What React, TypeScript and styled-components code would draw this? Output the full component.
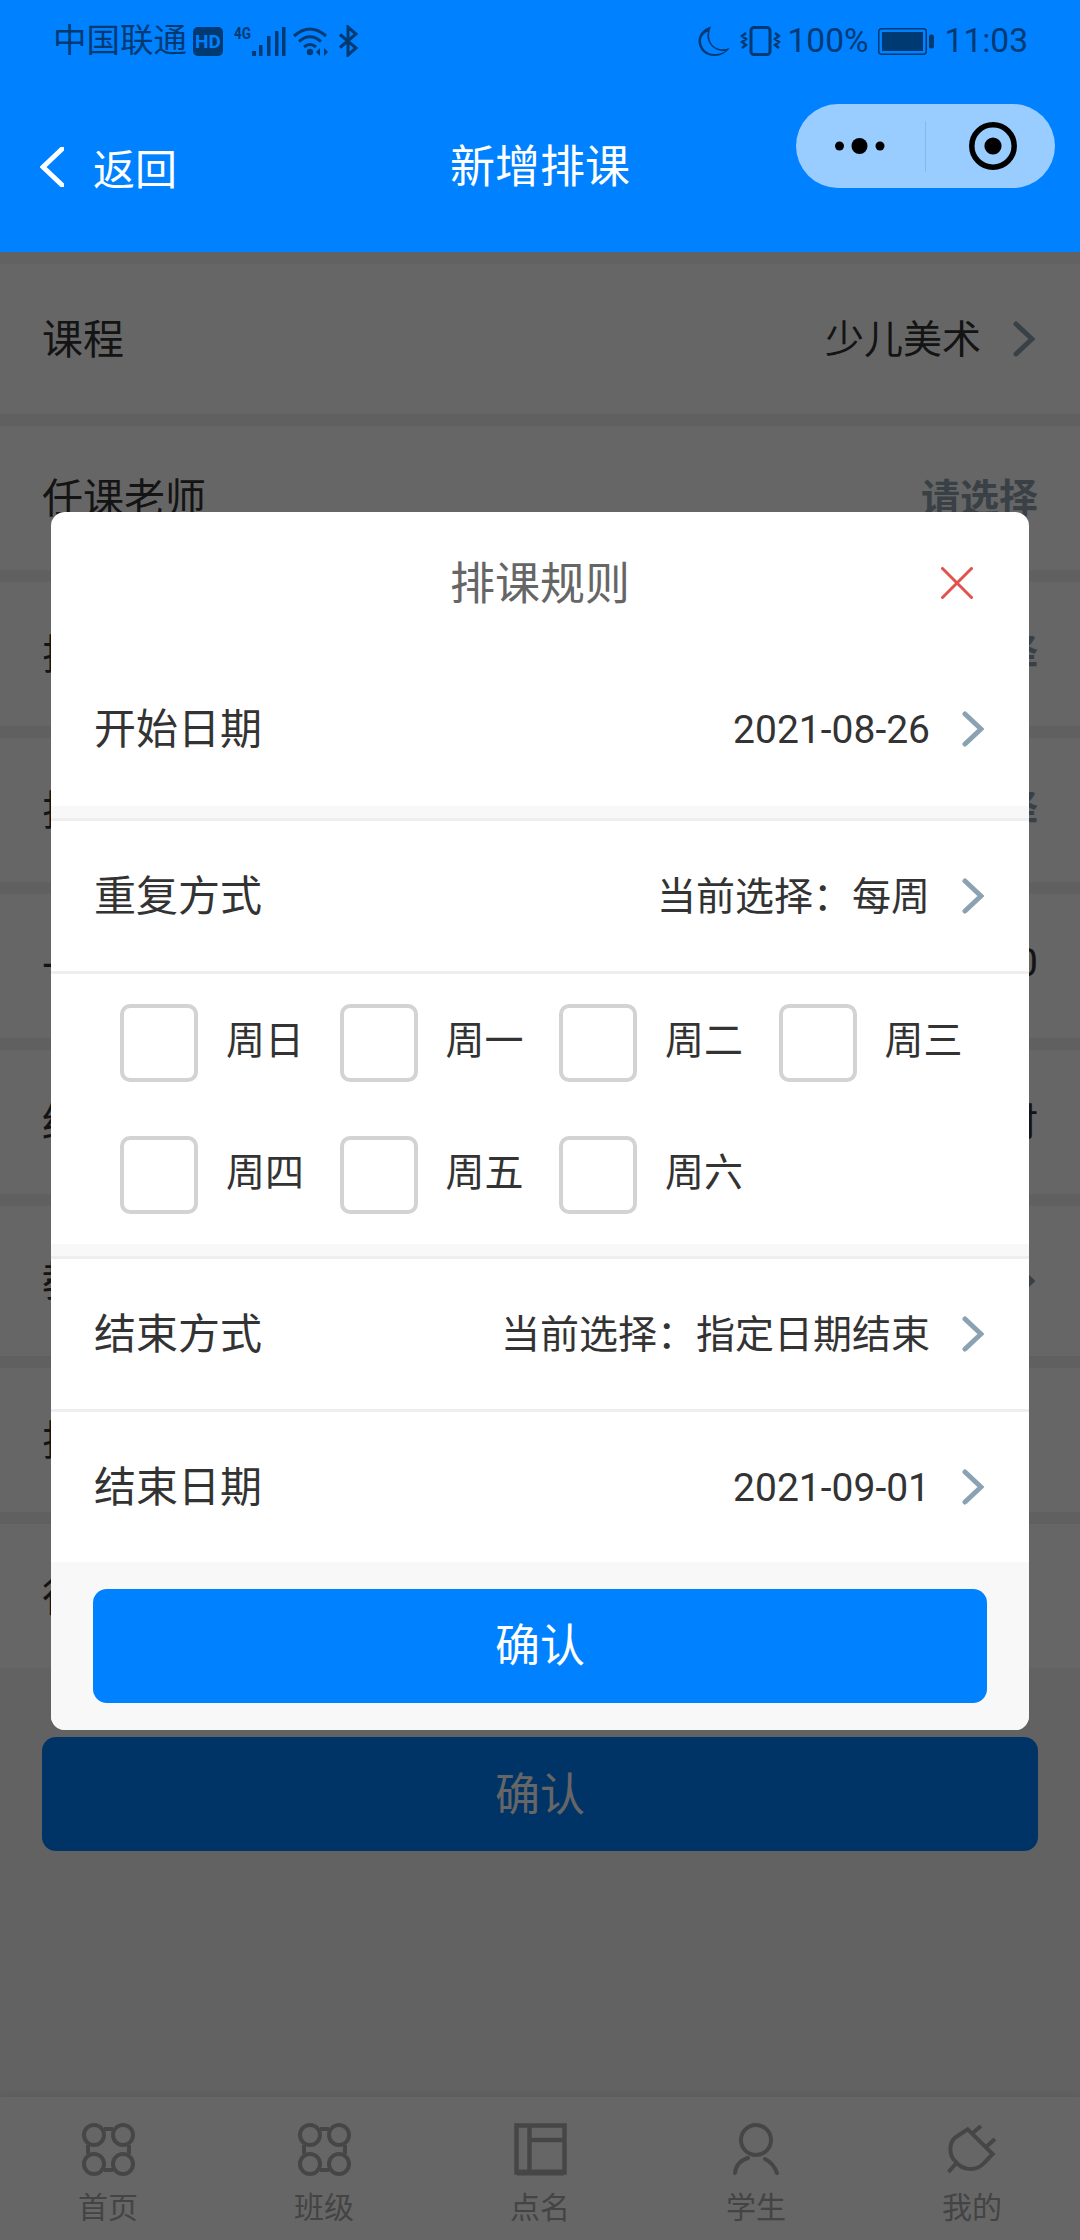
import React from "react";
import styled, { createGlobalStyle } from "styled-components";

const FONT = `Roboto, "Noto Sans CJK SC", "Noto Sans", sans-serif`;
const NAVY = "#003a73";

const Global = createGlobalStyle`
  html, body { margin: 0; padding: 0; background: #f5f5f5; }
  * { box-sizing: border-box; }
  body { font-family: ${FONT}; }
`;

const Page = styled.div`
  position: relative;
  width: 1080px;
  height: 2240px;
  overflow: hidden;
  display: flex;
  flex-direction: column;
  background: #f5f5f5;
  font-family: ${FONT};
`;

const Header = styled.header`
  height: 252px;
  flex: none;
  background: #0081ff;
`;

const StatusBar = styled.div`
  height: 82px;
  padding: 0 52px 0 53px;
  display: flex;
  align-items: center;
  justify-content: space-between;
  color: ${NAVY};
  font-size: 33.5px;
`;

const StatusGroup = styled.div`
  display: flex;
  align-items: center;
`;

const StatusIcon = styled.svg<{ $ml: number }>`
  display: block;
  flex: none;
  margin-left: ${(p) => p.$ml}px;
`;

const StatusText = styled.span<{ $ml?: number }>`
  margin-left: ${(p) => p.$ml ?? 0}px;
  line-height: 44px;
  white-space: nowrap;
`;

const HdBadge = styled.span`
  width: 30px;
  height: 29px;
  margin-left: 6px;
  border-radius: 5px;
  background: ${NAVY};
  color: #0081ff;
  font-size: 19px;
  font-weight: 700;
  display: flex;
  align-items: center;
  justify-content: center;
`;

const NavBar = styled.div`
  height: 170px;
  display: grid;
  grid-template-columns: 1fr auto 1fr;
  align-items: center;
  color: #fff;
`;

const BackLink = styled.div`
  display: flex;
  align-items: center;
  padding-left: 40px;
  font-size: 42px;
`;

const BackText = styled.span`
  margin-left: 29px;
  padding-bottom: 2px;
`;

const NavTitle = styled.div`
  font-size: 45px;
  margin-top: -8px;
`;

const Capsule = styled.div`
  justify-self: end;
  align-self: start;
  margin: 22px 25px 0 0;
  width: 259px;
  height: 84px;
  border-radius: 42px;
  background: #99cdff;
  display: flex;
  align-items: center;
`;

const CapsuleSide = styled.div<{ $w: number; $pl?: number }>`
  width: ${(p) => p.$w}px;
  padding-left: ${(p) => p.$pl ?? 0}px;
  display: flex;
  align-items: center;
  justify-content: center;
`;

const CapsuleRule = styled.div`
  width: 1px;
  height: 51px;
  background: rgba(0, 0, 0, 0.1);
`;

const Main = styled.main`
  flex: 1;
  padding-top: 12px;
`;

const RowList = styled.div`
  display: flex;
  flex-direction: column;
  gap: 12px;
  background: #f0f0f0;
`;

const FormRow = styled.div<{ $h: number }>`
  height: ${(p) => p.$h}px;
  padding: 0 42px;
  display: flex;
  align-items: center;
  justify-content: space-between;
  background: #fff;
  font-size: 41px;
  color: #333;
`;

const FormLabel = styled.span`
  padding-bottom: 6px;
`;

const FormValue = styled.div<{ $placeholder?: boolean }>`
  display: flex;
  align-items: center;
  font-size: 39px;
  font-weight: ${(p) => (p.$placeholder ? 700 : 400)};
  color: ${(p) => (p.$placeholder ? "#90a4ae" : "#333")};
`;

const FormValueText = styled.span`
  padding-bottom: 6px;
`;

const FormChevron = styled.svg`
  display: block;
  margin: 0 3px 0 32px;
`;

const PageButton = styled.button`
  display: block;
  width: 996px;
  height: 114px;
  margin: 69px 0 0 42px;
  padding: 0 0 5px;
  border: 0;
  border-radius: 14px;
  background: #0081ff;
  color: #fff;
  font: 400 45px ${FONT};
`;

const TabBar = styled.nav`
  position: relative;
  height: 143px;
  flex: none;
  display: grid;
  grid-template-columns: repeat(5, 1fr);
  padding-top: 26px;
  background: #fff;
  box-shadow: 0 -2px 8px rgba(0, 0, 0, 0.08);
`;

const Tab = styled.div`
  display: flex;
  flex-direction: column;
  align-items: center;
  color: #b0b0b0;
`;

const TabIcon = styled.div`
  height: 53px;
  display: flex;
  align-items: center;
  justify-content: center;
`;

const TabLabel = styled.span`
  margin-top: 14px;
  font-size: 30px;
  line-height: 36px;
  color: #aaa;
`;

const Overlay = styled.div`
  position: absolute;
  inset: 252px 0 0 0;
  padding: 260px 51px 0;
  background: rgba(0, 0, 0, 0.6);
`;

const Modal = styled.section`
  width: 978px;
  height: 1218px;
  border-radius: 14px;
  overflow: hidden;
  background: #fff;
  display: flex;
  flex-direction: column;
`;

const ModalHead = styled.div`
  position: relative;
  height: 140px;
  flex: none;
  display: flex;
  align-items: center;
  justify-content: center;
  padding-bottom: 3px;
  font-size: 45px;
  color: #666;
`;

const CloseIcon = styled.svg`
  position: absolute;
  top: 55px;
  right: 56px;
`;

const RuleRow = styled.div<{ $h: number; $line?: boolean }>`
  height: ${(p) => p.$h}px;
  flex: none;
  padding: 0 45px 0 43px;
  display: flex;
  align-items: center;
  justify-content: space-between;
  color: #333;
  font-size: 42px;
  border-bottom: ${(p) => (p.$line ? "3px solid #eee" : "0")};
`;

const RuleLabel = styled.span`
  padding-bottom: 8px;
`;

const RuleValue = styled.div`
  display: flex;
  align-items: center;
  font-size: 39px;
`;

const RuleValueText = styled.span<{ $cjk?: boolean }>`
  padding-bottom: ${(p) => (p.$cjk ? 6 : 0)}px;
  padding-top: ${(p) => (p.$cjk ? 0 : 2)}px;
`;

const RuleChevron = styled.svg`
  display: block;
  margin-left: 32px;
`;

const Band = styled.div`
  height: 15px;
  flex: none;
  background: #f8f8f8;
  border-bottom: 3px solid #eee;
`;

const DayGrid = styled.div`
  height: 270px;
  flex: none;
  padding: 30px 0 0 69px;
  display: grid;
  grid-template-columns: repeat(4, 219.5px);
  grid-auto-rows: 78px;
  row-gap: 54px;
`;

const DayItem = styled.label`
  display: flex;
  align-items: center;
  font-size: 39px;
  color: #333;
`;

const DayBox = styled.span`
  width: 78px;
  height: 78px;
  margin-right: 28px;
  border: 4px solid #d3d3d3;
  border-radius: 10px;
  background: #fff;
`;

const DayText = styled.span`
  padding-bottom: 13px;
`;

const ModalFoot = styled.div`
  flex: 1;
  padding: 27px 42px;
  background: #f8f8f8;
`;

const ModalButton = styled.button`
  display: block;
  width: 100%;
  height: 114px;
  padding: 0 0 7px;
  border: 0;
  border-radius: 14px;
  background: #0081ff;
  color: #fff;
  font: 400 45px ${FONT};
`;

const Chevron = ({ as: C, color }: { as: typeof RuleChevron; color: string }) => (
  <C width="22" height="36" viewBox="0 0 22 36" fill="none" stroke={color} strokeWidth="5" strokeLinecap="round" strokeLinejoin="miter">
    <path d="M3 3 L19 18 L3 33" />
  </C>
);

const HomeIcon = () => (
  <svg width="53" height="53" viewBox="0 0 53 53" fill="none" stroke="currentColor" strokeWidth="4">
    <circle cx="12" cy="12" r="10" />
    <circle cx="41" cy="12" r="10" />
    <circle cx="12" cy="41" r="10" />
    <circle cx="41" cy="41" r="10" />
    <path d="M22 6H31M22 47H31M6 22V31M47 22V31" />
  </svg>
);

const BookIcon = () => (
  <svg width="53" height="53" viewBox="0 0 53 53" fill="none" stroke="currentColor" strokeWidth="4.5">
    <rect x="2.5" y="2.5" width="48" height="47" />
    <path d="M15.5 3V50M16 17H50" />
    <path d="M3 49.5H50" strokeWidth="6" />
  </svg>
);

const PersonIcon = () => (
  <svg width="46" height="53" viewBox="0 0 46 53" fill="none" stroke="currentColor" strokeWidth="4" strokeLinecap="round">
    <circle cx="23" cy="17" r="15" />
    <path d="M2 50 C3 42 8 37 15 35M32 36 C38 39 42 44 44 50" />
  </svg>
);

const PlugIcon = () => (
  <svg width="50" height="50" viewBox="0 0 50 50" fill="none" stroke="currentColor" strokeWidth="4">
    <path d="M20.7 4.3 L45.7 29 L37 38 C29 47 15 45 9 37 C1 30 2 17 9 12 Z" />
    <path d="M25.7 8 L34 1M39 22 L48 14M9 38.5 L1.5 47" />
  </svg>
);

const tabs = [
  { label: "首页", icon: <HomeIcon /> },
  { label: "班级", icon: <HomeIcon /> },
  { label: "点名", icon: <BookIcon /> },
  { label: "学生", icon: <PersonIcon /> },
  { label: "我的", icon: <PlugIcon /> },
];

const formRows = [
  { h: 150, label: "课程", value: "少儿美术", chevron: true },
  { h: 144, label: "任课老师", value: "请选择", placeholder: true },
  { h: 144, label: "排课教室", value: "请选择", placeholder: true },
  { h: 144, label: "排课规则", value: "请选择", placeholder: true },
  { h: 144, label: "一次课时", value: "120" },
  { h: 144, label: "结算方式", value: "按课时" },
  { h: 150, label: "教学内容", value: "", chevron: true },
  { h: 144, label: "排课名称", value: "" },
  { h: 144, label: "行课备注", value: "" },
];

const days = ["周日", "周一", "周二", "周三", "周四", "周五", "周六"];

export default function App() {
  return (
    <Page>
      <Global />
      <Header>
        <StatusBar>
          <StatusGroup>
            <StatusText>中国联通</StatusText>
            <HdBadge>HD</HdBadge>
            <StatusIcon $ml={11} width="52" height="30" viewBox="0 0 52 30" fill={NAVY}>
              <text x="0" y="12.5" fontSize="16" fontWeight="700" fontFamily="Roboto" textLength="17" lengthAdjust="spacingAndGlyphs">4G</text>
              <rect x="18" y="25" width="4" height="5" />
              <rect x="25" y="19" width="3.5" height="11" />
              <rect x="33" y="10" width="3.5" height="20" />
              <rect x="41" y="5" width="3.5" height="25" />
              <rect x="48" y="1" width="3.5" height="29" />
            </StatusIcon>
            <StatusIcon $ml={7} width="38" height="30" viewBox="0 0 38 30" fill="none" stroke={NAVY} strokeWidth="3">
              <path d="M1 10 Q17 -4 33 10M6 15.5 Q17 6 28 15.5M11 21 Q17 16 23 21" />
              <circle cx="17" cy="26" r="3.2" fill={NAVY} stroke="none" />
              <path d="M27 22 L23 26 L27 30Z M31 22 L35 26 L31 30Z" fill={NAVY} stroke="none" />
            </StatusIcon>
            <StatusIcon $ml={7} width="21" height="32" viewBox="0 0 21 32" fill="none" stroke={NAVY} strokeWidth="3">
              <path d="M2 9.5 L18 23 L10 30 V2 L18 9 L2 22.5" />
            </StatusIcon>
          </StatusGroup>
          <StatusGroup>
            <StatusIcon $ml={0} width="32" height="30" viewBox="0 0 32 30" fill={NAVY}>
              <path d="M13 0.5 C5 2.5 0.5 9 0.5 15 C0.5 24 8 30 16 30 C23 30 28.5 26.5 31.5 22 C20 27 6 18 13 0.5 Z M10 5.5 C7 15 15 26 27.5 25 C24 27.5 20 28 16 28 C9 28 3 22 3 15 C3 11 5.5 7.5 10 5.5 Z" fillRule="evenodd" />
            </StatusIcon>
            <StatusIcon $ml={10} width="41" height="30" viewBox="0 0 41 30" fill="none" stroke={NAVY}>
              <rect x="11" y="1.5" width="19" height="27" rx="3" strokeWidth="3" />
              <path d="M6 7 L2 10 L6 13 L2 16 L6 19 L2 22 M35 7 L39 10 L35 13 L39 16 L35 19 L39 22" strokeWidth="2.5" />
            </StatusIcon>
            <StatusText $ml={7}>100%</StatusText>
            <StatusIcon $ml={9} width="57" height="27" viewBox="0 0 57 27" fill={NAVY}>
              <rect x="0.75" y="0.75" width="47.5" height="25.5" rx="3" fill="none" stroke={NAVY} strokeWidth="1.5" />
              <rect x="4" y="4" width="41" height="19" />
              <rect x="51" y="6.5" width="5" height="14" rx="2" />
            </StatusIcon>
            <StatusText $ml={10}>11:03</StatusText>
          </StatusGroup>
        </StatusBar>
        <NavBar>
          <BackLink>
            <svg width="24" height="40" viewBox="0 0 24 40" fill="none" stroke="#fff" strokeWidth="5" strokeLinecap="round">
              <path d="M22 2 L3 20 L22 38" />
            </svg>
            <BackText>返回</BackText>
          </BackLink>
          <NavTitle>新增排课</NavTitle>
          <Capsule>
            <CapsuleSide $w={129}>
              <svg width="52" height="18" viewBox="0 0 52 18" fill="#000">
                <circle cx="4.5" cy="9" r="4.5" />
                <circle cx="24.5" cy="9" r="8" />
                <circle cx="45" cy="9" r="4.5" />
              </svg>
            </CapsuleSide>
            <CapsuleRule />
            <CapsuleSide $w={129} $pl={5}>
              <svg width="48" height="48" viewBox="0 0 48 48" fill="none" stroke="#000" strokeWidth="5.5">
                <circle cx="24" cy="24" r="21.2" />
                <circle cx="24" cy="24" r="8.6" fill="#000" stroke="none" />
              </svg>
            </CapsuleSide>
          </Capsule>
        </NavBar>
      </Header>
      <Main>
        <RowList>
          {formRows.map((r) => (
            <FormRow key={r.label} $h={r.h}>
              <FormLabel>{r.label}</FormLabel>
              <FormValue $placeholder={r.placeholder}>
                <FormValueText>{r.value}</FormValueText>
                {r.chevron && <Chevron as={FormChevron} color="#90a4ae" />}
              </FormValue>
            </FormRow>
          ))}
        </RowList>
        <PageButton>确认</PageButton>
      </Main>
      <TabBar>
        {tabs.map((t) => (
          <Tab key={t.label}>
            <TabIcon>{t.icon}</TabIcon>
            <TabLabel>{t.label}</TabLabel>
          </Tab>
        ))}
      </TabBar>
      <Overlay>
        <Modal>
          <ModalHead>
            排课规则
            <CloseIcon width="32" height="32" viewBox="0 0 32 32" fill="none" stroke="#e0524a" strokeWidth="3" strokeLinecap="round">
              <path d="M1.5 1.5 L30.5 30.5 M30.5 1.5 L1.5 30.5" />
            </CloseIcon>
          </ModalHead>
          <RuleRow $h={154}>
            <RuleLabel>开始日期</RuleLabel>
            <RuleValue><RuleValueText>2021-08-26</RuleValueText><Chevron as={RuleChevron} color="#8ba2b2" /></RuleValue>
          </RuleRow>
          <Band />
          <RuleRow $h={153} $line>
            <RuleLabel>重复方式</RuleLabel>
            <RuleValue><RuleValueText $cjk>当前选择：每周</RuleValueText><Chevron as={RuleChevron} color="#8ba2b2" /></RuleValue>
          </RuleRow>
          <DayGrid>
            {days.map((d) => (
              <DayItem key={d}>
                <DayBox />
                <DayText>{d}</DayText>
              </DayItem>
            ))}
          </DayGrid>
          <Band />
          <RuleRow $h={153} $line>
            <RuleLabel>结束方式</RuleLabel>
            <RuleValue><RuleValueText $cjk>当前选择：指定日期结束</RuleValueText><Chevron as={RuleChevron} color="#8ba2b2" /></RuleValue>
          </RuleRow>
          <RuleRow $h={150}>
            <RuleLabel>结束日期</RuleLabel>
            <RuleValue><RuleValueText>2021-09-01</RuleValueText><Chevron as={RuleChevron} color="#8ba2b2" /></RuleValue>
          </RuleRow>
          <ModalFoot>
            <ModalButton>确认</ModalButton>
          </ModalFoot>
        </Modal>
      </Overlay>
    </Page>
  );
}
